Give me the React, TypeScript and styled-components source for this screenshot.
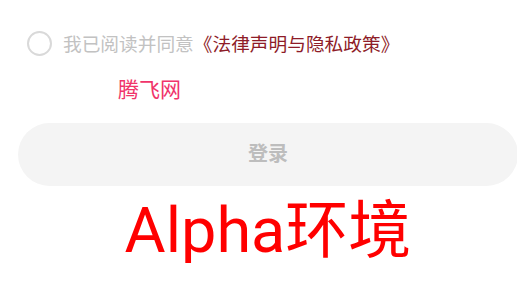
import { createGlobalStyle, styled } from 'styled-components';

const GlobalStyle = createGlobalStyle`
  html, body {
    margin: 0;
    padding: 0;
    background: #ffffff;
    overflow: hidden;
  }
  body {
    font-family: Roboto, 'Noto Sans CJK SC', sans-serif;
  }
`;

export default function App() {
  return (
    <>
      <GlobalStyle />
      <Page>
        <AgreementRow>
          <CheckCircle />
          <AgreementText>
            我已阅读并同意
            <PolicyLink>《法律声明与隐私政策》</PolicyLink>
          </AgreementText>
        </AgreementRow>
        <SiteName>腾飞网</SiteName>
        <LoginButton disabled>登录</LoginButton>
        <EnvLabel>Alpha环境</EnvLabel>
      </Page>
    </>
  );
}

const Page = styled.div`
  display: flex;
  flex-direction: column;
  width: 500px;
  padding: 31px 0 0 18px;
`;

const AgreementRow = styled.div`
  display: flex;
  align-items: center;
  gap: 11px;
  height: 24px;
  padding-left: 9px;
`;

const CheckCircle = styled.span`
  width: 25px;
  height: 25px;
  box-sizing: border-box;
  border: 2px solid #d9d9d9;
  border-radius: 50%;
  flex-shrink: 0;
`;

const AgreementText = styled.span`
  font-family: 'Noto Sans CJK SC', sans-serif;
  font-size: 18.7px;
  line-height: 24px;
  color: #c2c2c2;
  white-space: nowrap;
`;

const PolicyLink = styled.span`
  color: #8e1c28;
`;

const SiteName = styled.div`
  margin: 19px 0 0 100px;
  font-family: 'Noto Sans CJK SC', sans-serif;
  font-size: 21px;
  line-height: 28px;
  color: #f0346b;
`;

const LoginButton = styled.button`
  margin-top: 21px;
  width: 500px;
  height: 63px;
  border: none;
  border-radius: 32px;
  background: #f4f4f4;
  font-family: 'Noto Sans CJK SC', sans-serif;
  font-size: 20px;
  font-weight: 700;
  color: #bdbdbd;
  padding: 0 0 4px;
`;

const EnvLabel = styled.div`
  margin-top: 13px;
  text-align: center;
  font-size: 63px;
  line-height: 64px;
  color: #ff0000;
  white-space: nowrap;
`;
